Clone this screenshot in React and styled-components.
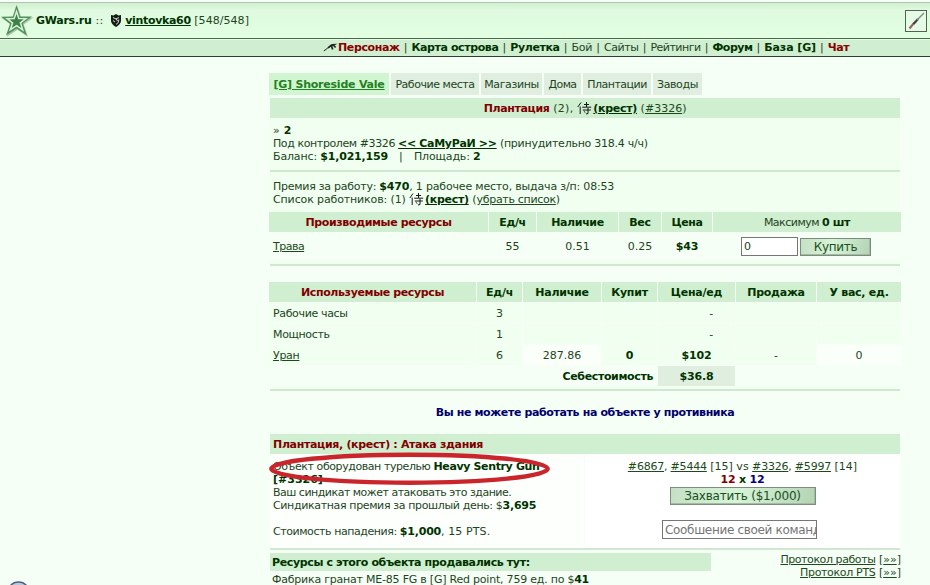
import React from "react";
import styled, { createGlobalStyle } from "styled-components";

const GlobalStyle = createGlobalStyle`
  * {
    box-sizing: border-box;
  }
  body {
    margin: 0;
    background: #f5fff5;
    overflow: hidden;
  }
`;

const Page = styled.div`
  width: 930px;
  height: 585px;
  position: relative;
  overflow: hidden;
  background: #f5fff5;
  color: #1d451d;
  font-family: Verdana, "DejaVu Sans", sans-serif;
  font-size: 11px;
  line-height: 13px;
  white-space: nowrap;
`;

const Header = styled.header`
  height: 36px;
  margin-top: 2px;
  padding: 0 3px 0 0;
  display: flex;
  align-items: center;
  border-top: 1px solid #b4c4b4;
  background: linear-gradient(#d0eed0 0, #dffadf 7px, #e2ffe2 100%);
`;

const Logo = styled.svg`
  width: 34px;
  height: 34px;
  flex: none;
`;

const Brand = styled.div`
  flex: 1;
  padding-left: 2px;
  display: flex;
  align-items: center;
`;

const Shield = styled.svg`
  width: 12px;
  height: 13px;
  margin: 0 3px 1px 3px;
`;

const WeaponSlot = styled.div`
  width: 22px;
  height: 22px;
  border: 1px solid #4f654f;
  background: #e6fbe6;
`;

const Nav = styled.nav`
  height: 19px;
  padding: 0 0 0 323px;
  display: flex;
  align-items: center;
  border-top: 1px solid #466a4c;
  border-bottom: 1px solid #2d3f30;
  background: #d0eed0;
  box-shadow: inset 0 1px #e8fce8;
`;

const Separator = styled.span`
  width: 11.8px;
  text-align: center;
`;

const Main = styled.main`
  width: 631px;
  margin-left: 270px;
`;

// $ls: letter-spacing in px
const Text = styled.span`
  letter-spacing: ${(p) => p.$ls ?? -0.25}px;
  white-space: pre;
`;

const Strong = styled.b`
  color: ${(p) => p.$color || "#003300"};
  letter-spacing: ${(p) => p.$ls ?? -0.37}px;
  white-space: pre;
`;

const Link = styled.a`
  color: ${(p) => p.$color || "#1b4a1b"};
  font-weight: ${(p) => (p.$bold ? 700 : 400)};
  letter-spacing: ${(p) => p.$ls ?? -0.1}px;
  text-decoration: underline;
  text-underline-offset: 1px;
  text-decoration-thickness: 1px;
`;

const Tabs = styled.div`
  margin: 16px 0 3px -1px;
  display: flex;
  gap: 2px;
`;

const Tab = styled.div`
  width: ${(p) => p.$w}px;
  height: 22px;
  display: flex;
  align-items: center;
  justify-content: center;
  background: ${(p) => (p.$active ? "#d0f5d0" : "#e0eee0")};
`;

const TitleBar = styled.div`
  height: 20px;
  width: 630px;
  padding: 0 3px;
  display: flex;
  align-items: center;
  justify-content: ${(p) => (p.$left ? "flex-start" : "center")};
  background: #d0eed0;
`;

const Info = styled.div`
  width: 630px;
  height: ${(p) => p.$h}px;
  padding: ${(p) => p.$top}px 0 0 3px;
  background: #f0fff0;
`;

const Line = styled.div`
  height: 13px;
  display: flex;
  align-items: center;
`;

const Rule = styled.div`
  width: 630px;
  height: 2px;
  background: #d0e8d0;
`;

const Table = styled.div`
  width: 632px;
  margin-left: -1px;
  margin-top: ${(p) => p.$top || 0}px;
  display: grid;
  grid-template-columns: ${(p) => p.$cols};
  column-gap: 1px;
  row-gap: 1px;
`;

const Cell = styled.div`
  height: ${(p) => p.$h || 20}px;
  padding: ${(p) => (p.$left ? "0 0 0 4px" : "0")};
  display: flex;
  align-items: center;
  justify-content: ${(p) => (p.$left ? "flex-start" : "center")};
  background: ${(p) => p.$bg || "transparent"};
`;

const HeadCell = styled(Cell)`
  background: #d0eed0;
`;

const ItemCell = styled(Cell)`
  height: 28px;
  padding-bottom: 1px;
`;

const TotalLabel = styled(Cell)`
  grid-column: 1 / 5;
  justify-content: flex-end;
  padding-right: 4px;
`;

const BuyForm = styled.div`
  margin-right: 2px;
  display: flex;
  gap: 2px;
  align-items: center;
`;

const Input = styled.input`
  width: ${(p) => p.$w}px;
  height: 19px;
  padding: 0 2px;
  border: 1px solid #767676;
  border-radius: 0;
  background: #fff;
  color: #183f18;
  font-family: inherit;
  font-size: ${(p) => p.$size || 11}px;
  letter-spacing: ${(p) => p.$ls || 0}px;
  &::placeholder {
    color: #757575;
    opacity: 1;
  }
`;

const MessageInput = styled(Input)`
  margin: 15px 6px 0 0;
  padding: 0 0 0 2px;
`;

const Button = styled.button`
  width: ${(p) => p.$w}px;
  height: 18px;
  padding: 0;
  border: 1px solid #7d8c7d;
  border-radius: 0;
  background: linear-gradient(100deg, #c5e0c5, #d8f4d8 45%, #b4d4b4);
  box-shadow: inset -1px -1px #a3bba3;
  color: #18501d;
  font-family: inherit;
  font-size: 12px;
  line-height: 14px;
  letter-spacing: ${(p) => p.$ls || 0}px;
`;

const CaptureButton = styled(Button)`
  margin-top: 1px;
`;

const Notice = styled.div`
  height: 43px;
  width: 630px;
  display: flex;
  align-items: center;
  justify-content: center;
`;

const Attack = styled.section`
  position: relative;
  width: 630px;
  height: 94px;
  display: grid;
  grid-template-columns: 314px 315px;
  gap: 1px;
`;

const AttackInfo = styled.div`
  padding: 6px 0 0 3px;
  background: #fdfffd;
`;

const AttackForm = styled.div`
  padding-top: 6px;
  display: flex;
  flex-direction: column;
  align-items: center;
  background: #fff;
`;

const Marker = styled.svg`
  position: absolute;
  left: -3px;
  top: -2px;
  width: 286px;
  height: 35px;
`;

const Footer = styled.div`
  width: 631px;
  display: flex;
  justify-content: space-between;
  padding-top: 3px;
`;

const Sales = styled.div`
  width: 441px;
`;

const SalesTitle = styled.div`
  height: 18px;
  margin-bottom: 3px;
  padding: 0 2px;
  display: flex;
  align-items: center;
  background: #d0eed0;
`;

const SalesRow = styled(Line)`
  height: 11px;
  line-height: 11px;
  padding-left: 2px;
`;

const Protocols = styled.div`
  text-align: right;
`;

const Orb = styled.svg`
  position: absolute;
  left: 7px;
  top: 581px;
  width: 23px;
  height: 4px;
`;

const Kanji = () => (
  <svg width="16" height="13" viewBox="0 0 16 13" fill="none" stroke="#161616" strokeWidth="1">
    <path d="M4 0.5 0.8 5M3.2 4.5V12M7 2.5h5M9.5 0v5M5.2 5.2h9M5.8 8h8M11 6v5.5l-2 .5M6.8 9.2l1.5 1.4" />
  </svg>
);

const Rifle = () => (
  <svg width="15" height="11" viewBox="0 0 15 11" fill="none">
    <path d="M0.8 9 4.5 6.2 9 3.4 13.5 2" stroke="#1d241d" strokeWidth="1" />
    <path d="M5 5.8 8.5 3 11.5 2.6M8.5 4l1.2 3.6M10.8 3.5l1.8 2" stroke="#1d241d" strokeWidth="1.7" />
  </svg>
);

const navItems = [
  { label: "Персонаж", bold: true, color: "#8b0000" },
  { label: "Карта острова", bold: true, ls: -0.4 },
  { label: "Рулетка", bold: true },
  { label: "Бой" },
  { label: "Сайты", ls: -0.4 },
  { label: "Рейтинги", ls: -0.5 },
  { label: "Форум", bold: true, ls: -0.5 },
  { label: "База [G]", bold: true, ls: -0.1 },
  { label: "Чат", bold: true, color: "#8b0000" },
];

const tabs = [
  { label: "Рабочие места", w: 88, ls: -0.45 },
  { label: "Магазины", w: 61, ls: -0.4 },
  { label: "Дома", w: 37, ls: -0.6 },
  { label: "Плантации", w: 68, ls: -0.5 },
  { label: "Заводы", w: 49, ls: -0.4 },
];

const usedHead = ["Ед/ч", "Наличие", "Купит", "Цена/ед", "Продажа", "У вас, ед."];

const rowBg = "#f0fff0";

const TopBar = () => (
  <Header>
    <Logo viewBox="0 0 34 34">
      <path d="M16.8 1.5 20.6 12.6 33 12.8 23.2 20 27.5 32.5 17 25.2 6 32.5 10.3 20.2 0.5 13 12.8 12.6Z" fill="#a9c7ab" transform="translate(0.6 0.6)" />
      <path d="M16.5 1 20.2 12.4 32 12.6 22.8 19.6 26.8 31.5 16.6 24.6 6 31.5 10 19.8 1 12.8 12.8 12.4Z" fill="#54905c" />
      <path d="M16.5 7.5 18.8 14.4 25.8 14.6 20.4 18.8 22.7 25.8 16.6 21.7 10.3 25.8 12.6 18.9 7.2 14.7 14.2 14.4Z" fill="#3f7f49" stroke="#d9f3da" strokeWidth="1.5" />
    </Logo>
    <Brand>
      <Strong $ls={-0.25}>GWars.ru</Strong>
      <Text $ls={0.3}> :: </Text>
      <Shield viewBox="0 0 12 13">
        <path d="M1 1 3.5 1.5 6 0 8.5 1.5 11 1V7Q10.5 10.5 6 13Q1.5 10.5 1 7Z" fill="#151b15" />
        <path d="M3 3.5 6 5 9 3.5M3 6.5 5 8M8.8 5.5Q9 9 6 10.5M6 4.5 7.5 7" stroke="#e5f6e5" fill="none" strokeWidth="0.9" />
      </Shield>
      <Link $bold $color="#003300" $ls={-0.33}>vintovka60</Link>
      <Text $ls={0.05}> [548/548]</Text>
    </Brand>
    <WeaponSlot>
      <svg width="20" height="20" viewBox="0 0 20 20" fill="none">
        <path d="M3.5 17.5 8 12" stroke="#96615a" strokeWidth="2" />
        <path d="M7.5 13 12 8" stroke="#3e4744" strokeWidth="2.2" />
        <path d="M11 9 18 2" stroke="#828b86" strokeWidth="1.5" />
      </svg>
    </WeaponSlot>
  </Header>
);

const Menu = () => (
  <Nav>
    <Rifle />
    {navItems.map((item, i) => (
      <React.Fragment key={item.label}>
        {i > 0 && <Separator>|</Separator>}
        {item.bold ? (
          <Strong $color={item.color} $ls={item.ls}>{item.label}</Strong>
        ) : (
          <Text $ls={item.ls}>{item.label}</Text>
        )}
      </React.Fragment>
    ))}
  </Nav>
);

const Produced = () => (
  <Table $cols="219px 47px 81px 42px 50px 188px">
    <HeadCell><Strong $color="#800000">Производимые ресурсы</Strong></HeadCell>
    <HeadCell><Strong>Ед/ч</Strong></HeadCell>
    <HeadCell><Strong>Наличие</Strong></HeadCell>
    <HeadCell><Strong>Вес</Strong></HeadCell>
    <HeadCell><Strong>Цена</Strong></HeadCell>
    <HeadCell><Text $ls={-0.5}>Максимум </Text><Strong>0 шт</Strong></HeadCell>
    <ItemCell $left><Link $ls={-0.5}>Трава</Link></ItemCell>
    <ItemCell>55</ItemCell>
    <ItemCell>0.51</ItemCell>
    <ItemCell>0.25</ItemCell>
    <ItemCell><Strong $ls={-0.2}>$43</Strong></ItemCell>
    <ItemCell>
      <BuyForm>
        <Input $w={57} defaultValue="0" />
        <Button $w={71} $ls={-0.3}>Купить</Button>
      </BuyForm>
    </ItemCell>
  </Table>
);

const Used = () => (
  <Table $top={16} $cols="207px 45px 78px 55px 77px 80px 84px">
    <HeadCell><Strong $color="#800000">Используемые ресурсы</Strong></HeadCell>
    {usedHead.map((label) => (
      <HeadCell key={label}><Strong $ls={-0.25}>{label}</Strong></HeadCell>
    ))}
    {[["Рабочие часы", 3], ["Мощность", 1]].map(([name, count]) => (
      <React.Fragment key={name}>
        <Cell $left $bg={rowBg}><Text $ls={-0.35}>{name}</Text></Cell>
        <Cell $bg={rowBg}>{count}</Cell>
        <Cell $bg={rowBg} />
        <Cell $bg={rowBg} />
        <Cell $bg={rowBg}><Text $ls={0.2}>{"        -"}</Text></Cell>
        <Cell $bg={rowBg} />
        <Cell $bg={rowBg} />
      </React.Fragment>
    ))}
    <Cell $left $bg={rowBg}><Link $ls={-0.3}>Уран</Link></Cell>
    <Cell $bg={rowBg}>6</Cell>
    <Cell $bg="#fafffa">287.86</Cell>
    <Cell $bg={rowBg}><Strong>0</Strong></Cell>
    <Cell $bg={rowBg}><Strong $ls={-0.2}>$102</Strong></Cell>
    <Cell $bg={rowBg}>-</Cell>
    <Cell $bg="#fafffa">0</Cell>
    <TotalLabel><Strong>Себестоимость</Strong></TotalLabel>
    <Cell $bg="#e0eee0"><Strong $ls={-0.2}>$36.8</Strong></Cell>
  </Table>
);

const App = () => (
  <Page>
    <GlobalStyle />
    <TopBar />
    <Menu />
    <Main>
      <Tabs>
        <Tab $active $w={120}><Link $bold $color="#228022" $ls={-0.22}>[G] Shoreside Vale</Link></Tab>
        {tabs.map((tab) => (
          <Tab key={tab.label} $w={tab.w}><Text $ls={tab.ls}>{tab.label}</Text></Tab>
        ))}
      </Tabs>
      <TitleBar>
        <Strong $color="#800000">Плантация</Strong>
        <Text $ls={0.3}> (2), </Text>
        <Kanji />
        <Link $bold $color="#003300" $ls={-0.3}>(крест)</Link>
        <Text $ls={0.1}> (</Text><Link $ls={0}>#3326</Link><Text>)</Text>
      </TitleBar>
      <Info $h={52} $top={6}>
        <Line><Text $ls={0.2}>» </Text><Strong>2</Strong></Line>
        <Line>
          <Text $ls={-0.4}>Под контролем #3326 </Text>
          <Link $bold $color="#003300" $ls={-0.33}>&lt;&lt; СаМуРаИ &gt;&gt;</Link>
          <Text> (принудительно 318.4 ч/ч)</Text>
        </Line>
        <Line>
          <Text $ls={-0.15}>Баланс: </Text><Strong $ls={-0.2}>$1,021,159</Strong>
          <Text $ls={0.2}>{"   |   "}</Text><Text $ls={-0.15}>{"Площадь: "}</Text><Strong>2</Strong>
        </Line>
      </Info>
      <Rule />
      <Info $h={40} $top={8}>
        <Line>
          <Text $ls={-0.26}>Премия за работу: </Text><Strong $ls={-0.2}>$470</Strong>
          <Text $ls={-0.18}>, 1 рабочее место, выдача з/п: 08:53</Text>
        </Line>
        <Line>
          <Text $ls={-0.13}>Список работников: (1) </Text>
          <Kanji />
          <Link $bold $color="#003300" $ls={-0.3}>(крест)</Link>
          <Text $ls={0}> (</Text><Link $ls={-0.3}>убрать список</Link><Text>)</Text>
        </Line>
      </Info>
      <Produced />
      <Info $h={3} $top={0} />
      <Rule />
      <Used />
      <Info $h={3} $top={0} />
      <Rule />
      <Notice><Strong $color="#00006b">Вы не можете работать на объекте у противника</Strong></Notice>
      <TitleBar $left>
        <Strong $color="#800000" $ls={-0.33}>Плантация, (крест) : Атака здания</Strong>
      </TitleBar>
      <Attack>
        <AttackInfo>
          <Line><Text $ls={-0.42}>Объект оборудован турелью </Text><Strong>Heavy Sentry Gun</Strong></Line>
          <Line><Strong $ls={0}>[#3326]</Strong></Line>
          <Line><Text $ls={-0.5}>Ваш синдикат может атаковать это здание.</Text></Line>
          <Line><Text $ls={-0.36}>Синдикатная премия за прошлый день: $</Text><Strong $ls={-0.2}>3,695</Strong></Line>
          <Line />
          <Line><Text $ls={-0.43}>Стоимость нападения: </Text><Strong $ls={-0.2}>$1,000</Strong><Text $ls={0.1}>, 15 PTS.</Text></Line>
        </AttackInfo>
        <AttackForm>
          <Line>
            <Link $ls={-0.2}>#6867</Link><Text>, </Text><Link $ls={-0.2}>#5444</Link><Text $ls={0}> [15] vs </Text>
            <Link $ls={-0.2}>#3326</Link><Text>, </Text><Link $ls={-0.2}>#5997</Link><Text $ls={0}> [14]</Text>
          </Line>
          <Line>
            <Strong $color="#800000" $ls={-0.2}>12</Strong>
            <Strong $ls={-0.2}> x </Strong>
            <Strong $color="#000080" $ls={-0.2}>12</Strong>
          </Line>
          <CaptureButton $w={146} $ls={-0.22}>Захватить ($1,000)</CaptureButton>
          <MessageInput $w={155} $size={12} $ls={-0.32} placeholder="Сообшение своей команде" />
        </AttackForm>
        <Marker viewBox="0 0 286 35">
          <ellipse cx="142.5" cy="16.7" rx="138.2" ry="14" fill="none" stroke="#c9252b" strokeWidth="4.4" />
        </Marker>
      </Attack>
      <Rule />
      <Footer>
        <Sales>
          <SalesTitle><Strong>Ресурсы с этого объекта продавались тут:</Strong></SalesTitle>
          <SalesRow>
            <Text $ls={-0.22}>Фабрика гранат ME-85 FG в [G] Red point, 759 ед. по $</Text>
            <Strong>41</Strong>
          </SalesRow>
        </Sales>
        <Protocols>
          <div><Link $ls={-0.42}>Протокол работы</Link> [<Link $ls={0}>»»</Link>]</div>
          <div><Link $ls={-0.33}>Протокол PTS</Link> [<Link $ls={0}>»»</Link>]</div>
        </Protocols>
      </Footer>
    </Main>
    <Orb viewBox="0 0 23 4">
      <circle cx="11.5" cy="12" r="11" fill="#b8c9e4" stroke="#4f6178" strokeWidth="1.5" />
    </Orb>
  </Page>
);

export default App;
